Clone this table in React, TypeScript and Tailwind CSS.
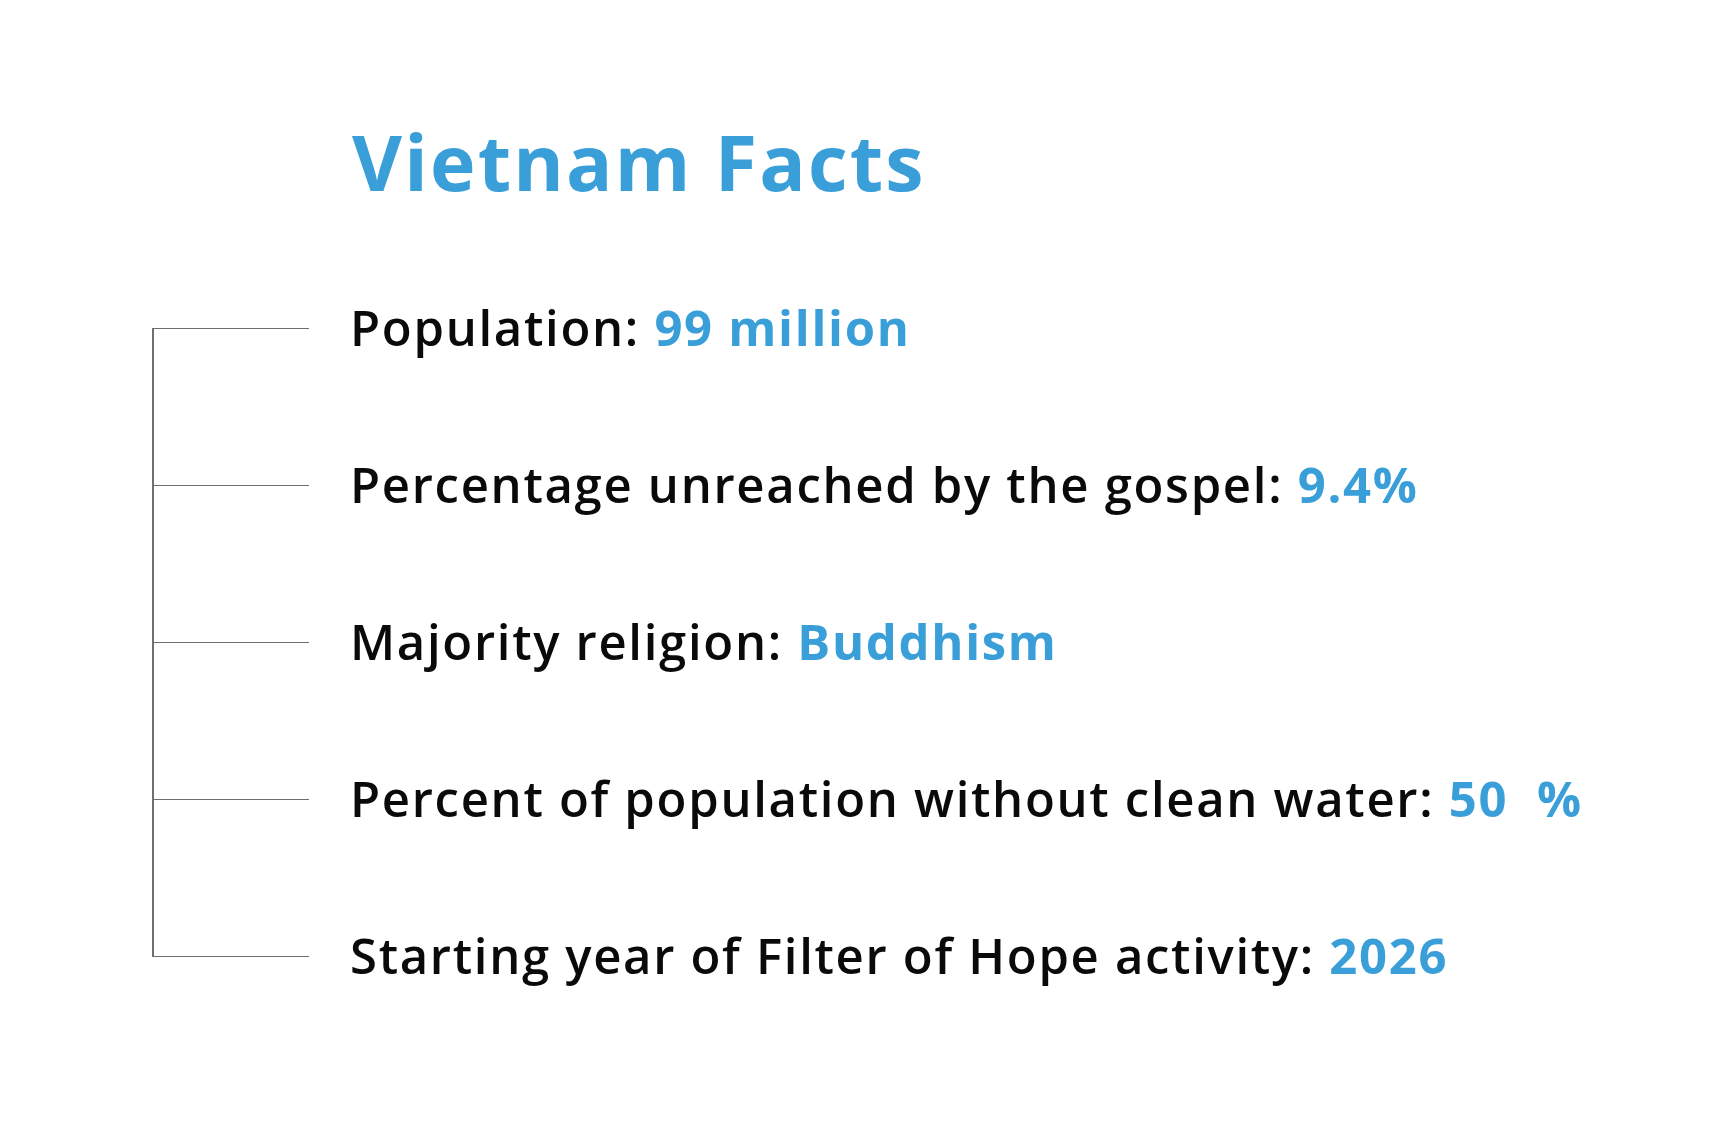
import React from "react";

const rows: { label: string; value: string }[] = [
  { label: "Population:", value: "99 million" },
  { label: "Percentage unreached by the gospel:", value: "9.4%" },
  { label: "Majority religion:", value: "Buddhism" },
  { label: "Percent of population without clean water:", value: "50\u00a0\u00a0%" },
  { label: "Starting year of Filter of Hope activity:", value: "2026" },
];

export default function App() {
  return (
    <div
      className="min-h-[1125px] w-full bg-white pt-[123px]"
      style={{ fontFamily: '"Open Sans", "Noto Sans", sans-serif' }}
    >
      <h1 className="ml-[352px] text-[77px] font-bold leading-none tracking-[2.2px] text-[#3a9fd8]">
        Vietnam Facts
      </h1>
      <ul className="mt-[50px] ml-[152px]">
        {rows.map((r, i) => {
          const first = i === 0;
          const last = i === rows.length - 1;
          return (
            <li key={r.label} className="flex h-[157px] items-center">
              <div className="relative flex h-full w-[157px] items-center">
                {first && (
                  <div className="absolute left-0 top-1/2 bottom-0 w-[1.5px] bg-[#6f6f6f]" />
                )}
                {!first && !last && (
                  <div className="absolute left-0 top-0 bottom-0 w-[1.5px] bg-[#6f6f6f]" />
                )}
                {last && (
                  <div className="absolute left-0 top-0 bottom-1/2 w-[1.5px] bg-[#6f6f6f]" />
                )}
                <div className="h-[1.5px] w-full bg-[#6f6f6f]" />
              </div>
              <p className="ml-[41px] -mt-[2px] whitespace-pre text-[49px] leading-none font-semibold tracking-[1.7px] text-[#0a0a0a]">
                {r.label}{" "}
                <span className="font-bold text-[#3a9fd8]">{r.value}</span>
              </p>
            </li>
          );
        })}
      </ul>
    </div>
  );
}
